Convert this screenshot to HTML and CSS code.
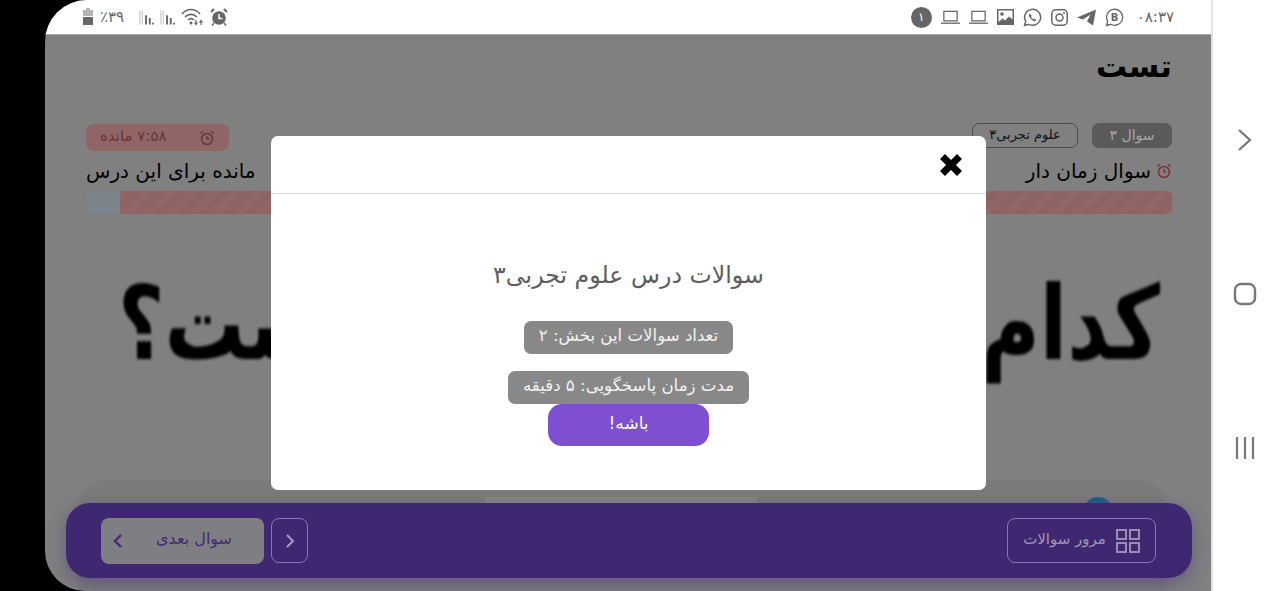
FILE: index.html
```html
<!DOCTYPE html>
<html lang="fa">
<head>
<meta charset="utf-8">
<title>تست</title>
<link rel="stylesheet" href="styles.css">
</head>
<body>
<div class="device">
  <main class="screen">
    <header class="status">
      <div class="status-group status-left">
        <svg class="ic" width="12" height="18" viewBox="0 0 12 18"><path d="M4 0h4v2h3v6H1V2h3z" fill="#b5b5b5"/><path d="M1 9h10v8H1z" fill="#666"/></svg>
        <span class="status-text pct">٪۳۹</span>
        <svg class="ic signal" width="15" height="17" viewBox="0 0 16 17"><path d="M1 1v15M3.500 1v15" stroke="#bbb" stroke-width="1"/><path d="M6.500 6h2v10h-2zM10.500 9h2v7h-2zM14 14h2v2h-2z" fill="#666"/></svg>
        <svg class="ic signal" width="15" height="17" viewBox="0 0 16 17"><path d="M1 1v15M3.500 1v15" stroke="#bbb" stroke-width="1"/><path d="M6.500 6h2v10h-2zM10.500 9h2v7h-2zM14 14h2v2h-2z" fill="#666"/></svg>
        <svg class="ic" width="23" height="18" viewBox="0 0 23 18"><g fill="none" stroke="#666" stroke-width="1.600"><path d="M1 6c5-6 13-6 18 0"/><path d="M4 9c3.500-3.500 8.500-3.500 12 0"/><path d="M7 12c2-1.800 4-1.800 6 0"/></g><circle cx="10" cy="15" r="1.500" fill="#666"/><path d="M15 12v4M13.500 14.500l1.500 2 1.500-2M20 17v-4M18.500 14.500l1.500-2 1.500 2" stroke="#666" stroke-width="1.200" fill="none"/></svg>
        <svg class="ic" width="18" height="18" viewBox="0 0 18 18"><circle cx="9" cy="10" r="6.800" fill="#666"/><path d="M9 6v4.500h3.500" stroke="#fff" stroke-width="1.500" fill="none"/><path d="M1 4l3-3M17 4l-3-3" stroke="#666" stroke-width="2"/><path d="M4 15l-2 2.500M14 15l2 2.500" stroke="#666" stroke-width="1.500"/></svg>
      </div>
      <div class="status-group status-right">
        <span class="notice-count">۱</span>
        <svg class="ic" width="19" height="15" viewBox="0 0 20 15"><path d="M3 1h14v10H3z" fill="none" stroke="#666" stroke-width="1.300"/><path d="M0 13.500h20" stroke="#666" stroke-width="1.400"/></svg>
        <svg class="ic" width="19" height="15" viewBox="0 0 20 15"><path d="M3 1h14v10H3z" fill="none" stroke="#666" stroke-width="1.300"/><path d="M0 13.500h20" stroke="#666" stroke-width="1.400"/></svg>
        <svg class="ic" width="17" height="16" viewBox="0 0 17 16"><path d="M0 0h17v16H0z" fill="#666"/><path d="M1.500 1.500h14v9l-3.500-3-4 4-2.500-2-4 3.500z" fill="#fff"/><circle cx="5" cy="5" r="1.800" fill="#666"/></svg>
        <svg class="ic" width="19" height="19" viewBox="0 0 19 19"><path d="M1.500 17.500l1.200-4.200A8 8 0 1 1 5.800 16.300z" fill="none" stroke="#666" stroke-width="1.500"/><path d="M6.500 5.500c-1.500 1.500-.5 3.500 1.500 5.500s4 3 5.500 1.500l-2-2-1.200.8c-1-.5-1.800-1.300-2.300-2.300l.8-1.200z" fill="#666"/></svg>
        <svg class="ic" width="17" height="17" viewBox="0 0 17 17"><rect x=".8" y=".8" width="15.400" height="15.400" rx="4" fill="none" stroke="#666" stroke-width="1.500"/><circle cx="8.500" cy="8.500" r="3.500" fill="none" stroke="#666" stroke-width="1.500"/><circle cx="13" cy="4" r="1" fill="#666"/></svg>
        <svg class="ic" width="19" height="17" viewBox="0 0 19 17"><path d="M0 8.500L19 .5l-3 16-6-4 3.500-7-7.500 5z" fill="#666"/></svg>
        <svg class="ic" width="19" height="19" viewBox="0 0 19 19"><path d="M1.500 17.500l1.200-4.200A8 8 0 1 1 5.800 16.300z" fill="none" stroke="#666" stroke-width="1.300"/><text class="biz-letter" x="9.500" y="13" text-anchor="middle">B</text></svg>
        <span class="status-text clock">۰۸:۳۷</span>
      </div>
    </header>

    <section class="content" dir="rtl">
      <h1 class="page-title">تست</h1>
      <div class="meta-row">
        <div class="meta-tags">
          <span class="tag tag-dark">سوال ۳</span>
          <span class="tag tag-outline">علوم تجربی۳</span>
        </div>
        <div class="timer-pill">
          <svg width="16" height="16" viewBox="0 0 16 16"><circle cx="8" cy="9" r="5.500" fill="none" stroke="#6e3434" stroke-width="1.500"/><path d="M8 6v3.200h2.500M1.500 3.500L4 1.200M14.500 3.500L12 1.200" fill="none" stroke="#6e3434" stroke-width="1.300"/></svg>
          <span class="timer-text">۷:۵۸ مانده</span>
        </div>
      </div>
      <div class="info-row">
        <div class="info-item">
          <svg width="16" height="16" viewBox="0 0 16 16"><circle cx="8" cy="9" r="5.500" fill="none" stroke="#7c2f2f" stroke-width="1.500"/><path d="M8 6v3.200h2.500M1.500 3.500L4 1.200M14.500 3.500L12 1.200" fill="none" stroke="#7c2f2f" stroke-width="1.300"/></svg>
          <span>سوال زمان دار</span>
        </div>
        <div class="info-item">مانده برای این درس</div>
      </div>
      <div class="progress"><div class="progress-fill"></div></div>
      <p class="question">کدام مورد درست است؟</p>
      <div class="answer-card">
        <div class="answer-line"></div>
        <div class="answer-dot"></div>
      </div>
    </section>

    <nav class="action-bar" dir="rtl">
      <button class="bar-btn review">
        <svg width="24" height="24" viewBox="0 0 24 24" fill="none" stroke="#9c8cb0" stroke-width="2"><rect x="1" y="1" width="9" height="9"/><rect x="14" y="1" width="9" height="9"/><rect x="1" y="14" width="9" height="9"/><rect x="14" y="14" width="9" height="9"/></svg>
        <span class="btn-label">مرور سوالات</span>
      </button>
      <div class="bar-nav">
        <button class="bar-btn prev">
          <svg width="10" height="16" viewBox="0 0 10 16" fill="none" stroke="#a99cbc" stroke-width="2"><path d="M2 2l6 6-6 6"/></svg>
        </button>
        <button class="next">
          <span class="btn-label">سوال بعدی</span>
          <svg width="10" height="16" viewBox="0 0 10 16" fill="none" stroke="#432a78" stroke-width="2.400"><path d="M8 2L2 8l6 6"/></svg>
        </button>
      </div>
    </nav>

    <div class="modal-layer">
      <div class="modal" dir="rtl">
        <div class="modal-head">
          <svg width="26" height="26" viewBox="0 0 26 26"><path d="M4.500 4.500l17 17M21.500 4.500l-17 17" stroke="#000" stroke-width="7"/></svg>
        </div>
        <div class="modal-body">
          <h2 class="modal-title">سوالات درس علوم تجربی۳</h2>
          <span class="modal-pill">تعداد سوالات این بخش: ۲</span>
          <span class="modal-pill">مدت زمان پاسخگویی: ۵ دقیقه</span>
          <button class="modal-ok">باشه!</button>
        </div>
      </div>
    </div>
  </main>

  <aside class="sysnav">
    <svg width="16" height="24" viewBox="0 0 16 24" fill="none" stroke="#777" stroke-width="2.200"><path d="M2 2l11 10L2 22"/></svg>
    <svg width="24" height="24" viewBox="0 0 24 24" fill="none" stroke="#777" stroke-width="2.400"><rect x="2" y="2" width="20" height="20" rx="6"/></svg>
    <svg width="24" height="24" viewBox="0 0 24 24" fill="none" stroke="#777" stroke-width="2.200"><path d="M4 1v22M12 1v22M20 1v22"/></svg>
  </aside>
</div>
</body>
</html>
```
FILE: styles.css
```css
* { box-sizing: border-box; }
html, body { margin: 0; height: 100%; }
body {
  width: 1280px;
  height: 591px;
  overflow: hidden;
  background: #000;
  font-family: "DejaVu Sans", sans-serif;
}
.device {
  display: flex;
  height: 591px;
  padding-left: 45px;
}
.screen {
  position: relative;
  width: 1166px;
  height: 591px;
  overflow: hidden;
  background: #808080;
  border-radius: 42px 0 0 40px;
}
.sysnav {
  width: 69px;
  height: 591px;
  background: #fff;
  border-left: 2px solid #e2e2e2;
  display: flex;
  flex-direction: column;
  align-items: center;
  gap: 130px;
  padding: 128px 3px 0 0;
}
.status {
  height: 35px;
  background: #fff;
  border-bottom: 1px solid #a8a8a8;
  display: flex;
  justify-content: space-between;
  align-items: center;
  padding: 0 37px;
}
.status-group { display: flex; align-items: center; }
.status-left { gap: 6px; }
.status-right { gap: 9px; }
.status-text { color: #666; font-size: 15px; line-height: 18px; }
.pct { margin-right: 9px; letter-spacing: 1.500px; }
.notice-count {
  width: 21px;
  height: 21px;
  border-radius: 50%;
  background: #666;
  color: #fff;
  font-size: 12px;
  line-height: 21px;
  text-align: center;
}
.ic { display: block; flex: none; }
.biz-letter { font-size: 10px; font-weight: 700; fill: #666; font-family: "DejaVu Sans", sans-serif; }
.clock { margin-left: 4px; letter-spacing: 1px; }

.content { padding: 0 39px 0 41px; color: #000; }
.page-title {
  margin: 7px 0 0;
  font-size: 31px;
  line-height: 48px;
  font-weight: 700;
  color: #000;
}
.meta-row {
  display: flex;
  justify-content: space-between;
  align-items: flex-start;
  margin-top: 33px;
}
.meta-tags { display: flex; gap: 14px; }
.tag {
  height: 25px;
  border-radius: 7px;
  font-size: 14px;
  line-height: 24px;
  text-align: center;
}
.tag-dark { width: 80px; background: #5a5a5a; color: #a8a8a8; }
.tag-outline { width: 106px; border: 1px solid #4c4c4c; color: #111; line-height: 22px; font-size: 13px; }
.timer-pill {
  width: 143px;
  height: 27px;
  margin-top: 1px;
  border-radius: 8px;
  background: #8f6565;
  color: #6e3434;
  font-size: 15px;
  display: flex;
  align-items: center;
  padding: 0 14px;
  justify-content: space-between;
}
.timer-text { margin-top: -4px; }
.info-row {
  display: flex;
  justify-content: space-between;
  margin-top: 7px;
  font-size: 20px;
  line-height: 26px;
}
.info-item { display: flex; align-items: center; gap: 5px; white-space: nowrap; }
.progress {
  height: 23px;
  margin-top: 7px;
  border-radius: 5px;
  background: #7b848a;
  overflow: hidden;
}
.progress-fill {
  height: 100%;
  width: calc(100% - 34px);
  background: repeating-linear-gradient(-45deg, #916666 0 8px, #8d6262 8px 16px);
}
.question {
  margin: 45px 12px 0 0;
  width: 1042px;
  font-size: 80px;
  line-height: 130px;
  font-weight: 700;
  text-align: justify;
  text-align-last: justify;
  color: #000;
  filter: blur(1.200px);
  transform: scaleY(1.28);
}
.answer-card {
  position: relative;
  height: 110px;
  margin: 91px 7px 0 -8px;
  border-radius: 26px 26px 0 0;
  background: #7b7b7b;
}
.answer-line {
  position: absolute;
  left: 407px;
  top: 17px;
  width: 272px;
  height: 30px;
  background: #858585;
}
.answer-dot {
  position: absolute;
  right: 52px;
  top: 17px;
  width: 30px;
  height: 30px;
  border-radius: 50%;
  background: #1d5f85;
}

.action-bar {
  position: absolute;
  left: 21px;
  bottom: 13px;
  width: 1126px;
  height: 75px;
  border-radius: 24px;
  background: #3f2772;
  box-shadow: 0 6px 18px rgba(67, 42, 120, .45);
  display: flex;
  justify-content: space-between;
  align-items: center;
  padding: 0 36px 0 35px;
}
.bar-nav { display: flex; gap: 7px; align-items: center; }
.bar-btn {
  height: 45px;
  background: transparent;
  border: 1px solid #8a78a8;
  border-radius: 8px;
  display: flex;
  align-items: center;
  justify-content: center;
  padding: 0;
  font-family: inherit;
}
.btn-label { margin-top: -4px; }
.review { width: 149px; gap: 10px; font-size: 15px; color: #a296b4; }
.prev { width: 37px; }
.next {
  width: 163px;
  height: 46px;
  border: 0;
  border-radius: 8px;
  background: #7f7e82;
  color: #432a78;
  font-family: inherit;
  font-size: 16px;
  display: flex;
  align-items: center;
  justify-content: space-between;
  padding: 0 32px 0 12px;
}

.modal-layer {
  position: absolute;
  left: 0;
  right: 0;
  top: 35px;
  bottom: 0;
  display: flex;
  align-items: center;
  justify-content: flex-end;
  padding-right: 225px;
}
.modal {
  width: 715px;
  height: 354px;
  background: #fff;
  border-radius: 7px;
  display: flex;
  flex-direction: column;
}
.modal-head {
  height: 58px;
  border-bottom: 1px solid #d8d8d8;
  display: flex;
  align-items: center;
  padding: 0 22px;
  flex: none;
}
.modal-body {
  display: flex;
  flex-direction: column;
  align-items: center;
  padding-top: 61px;
}
.modal-title {
  margin: 0 0 26px;
  font-size: 23.700px;
  line-height: 40px;
  font-weight: 400;
  color: #5e5e5e;
}
.modal-pill {
  height: 33px;
  padding: 0 15px;
  border-radius: 7px;
  background: #888;
  color: #f2f2f2;
  font-size: 16.600px;
  line-height: 29px;
  white-space: nowrap;
}
.modal-pill + .modal-pill { margin-top: 17px; }
.modal-ok {
  width: 161px;
  height: 42px;
  border: 0;
  border-radius: 14px;
  background: #7e4fd0;
  color: #fff;
  font-family: inherit;
  font-size: 17px;
  padding: 0 0 4px;
}
```
